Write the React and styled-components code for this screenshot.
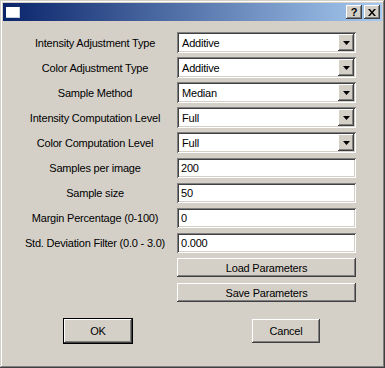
import React from "react";
import styled, { createGlobalStyle } from "styled-components";

const GlobalStyle = createGlobalStyle`
  html, body {
    margin: 0;
    padding: 0;
    background: #d4d0c8;
  }
  * {
    box-sizing: border-box;
  }
`;

const raised = `
  background: #d4d0c8;
  box-shadow: inset -1px -1px #404040, inset 1px 1px #ffffff,
    inset -2px -2px #808080, inset 2px 2px #d4d0c8;
`;

const sunken = `
  background: #ffffff;
  box-shadow: inset 1px 1px #808080, inset -1px -1px #ffffff,
    inset 2px 2px #404040, inset -2px -2px #d4d0c8;
`;

const Window = styled.div`
  width: 385px;
  height: 368px;
  padding: 3px;
  background: #d4d0c8;
  box-shadow: inset -1px -1px #404040, inset 1px 1px #d4d0c8,
    inset -2px -2px #808080, inset 2px 2px #ffffff;
  font-family: "Liberation Sans", Arial, sans-serif;
  font-size: 11px;
  letter-spacing: -0.2px;
  color: #000;
`;

const TitleBar = styled.div`
  height: 18px;
  display: flex;
  align-items: center;
  padding: 0 2px 0 3px;
  background: linear-gradient(to right, #0a246a, #a6caf0);
`;

const AppIcon = styled.div`
  width: 14px;
  height: 11px;
  background: #ffffff;
  box-shadow: inset -1px -1px #c8d0e0;
`;

const Spacer = styled.div`
  flex: 1;
`;

const CaptionButton = styled.button`
  ${raised}
  width: 16px;
  height: 14px;
  padding: 0;
  border: none;
  margin-left: ${(p) => (p.$gap ? "2px" : "0")};
  display: flex;
  align-items: center;
  justify-content: center;
  font-family: "Liberation Sans", Arial, sans-serif;
  font-weight: bold;
  font-size: 11px;
  line-height: 1;
  color: #000;
`;

const Client = styled.div`
  padding: 9px 0 0 17px;
`;

const Form = styled.div`
  display: grid;
  grid-template-columns: 150px 179px;
  grid-auto-rows: 25px;
  column-gap: 7px;
  align-items: center;
`;

const Label = styled.div`
  text-align: center;
  white-space: nowrap;
`;

const Combo = styled.div`
  ${sunken}
  height: 21px;
  display: flex;
  align-items: center;
  padding: 2px 2px 2px 5px;
`;

const ComboText = styled.span`
  flex: 1;
`;

const DropButton = styled.div`
  ${raised}
  width: 16px;
  height: 17px;
  display: flex;
  align-items: center;
  justify-content: center;
`;

const Edit = styled.div`
  ${sunken}
  height: 20px;
  display: flex;
  align-items: center;
  padding: 0 4px;
`;

const PushButton = styled.button`
  ${raised}
  grid-column: ${(p) => (p.$wide ? "2" : "auto")};
  height: ${(p) => (p.$wide ? "19px" : "24px")};
  width: ${(p) => (p.$wide ? "100%" : "68px")};
  border: none;
  padding: 0;
  font-family: "Liberation Sans", Arial, sans-serif;
  font-size: 11px;
  letter-spacing: -0.2px;
  color: #000;
`;

const DefaultFrame = styled.div`
  border: 1px solid #000;
  display: flex;
`;

const Footer = styled.div`
  display: flex;
  align-items: center;
  gap: 119px;
  margin-top: 13px;
  padding-left: 43px;
`;

const Arrow = () => (
  <svg width="7" height="4" viewBox="0 0 7 4">
    <path d="M0 0h7L3.5 4z" fill="#000" />
  </svg>
);

const CloseGlyph = () => (
  <svg width="8" height="7" viewBox="0 0 8 7">
    <path d="M0 0h2l2 2.5L6 0h2L5 3.5 8 7H6L4 4.5 2 7H0l3-3.5z" fill="#000" />
  </svg>
);

const combos = [
  ["Intensity Adjustment Type", "Additive"],
  ["Color Adjustment Type", "Additive"],
  ["Sample Method", "Median"],
  ["Intensity Computation Level", "Full"],
  ["Color Computation Level", "Full"],
];

const edits = [
  ["Samples per image", "200"],
  ["Sample size", "50"],
  ["Margin Percentage (0-100)", "0"],
  ["Std. Deviation Filter (0.0 - 3.0)", "0.000"],
];

export default function App() {
  return (
    <>
      <GlobalStyle />
      <Window>
        <TitleBar>
          <AppIcon />
          <Spacer />
          <CaptionButton>?</CaptionButton>
          <CaptionButton $gap>
            <CloseGlyph />
          </CaptionButton>
        </TitleBar>
        <Client>
          <Form>
            {combos.map(([label, value]) => (
              <React.Fragment key={label}>
                <Label>{label}</Label>
                <Combo>
                  <ComboText>{value}</ComboText>
                  <DropButton>
                    <Arrow />
                  </DropButton>
                </Combo>
              </React.Fragment>
            ))}
            {edits.map(([label, value]) => (
              <React.Fragment key={label}>
                <Label>{label}</Label>
                <Edit>{value}</Edit>
              </React.Fragment>
            ))}
            <PushButton $wide>Load Parameters</PushButton>
            <PushButton $wide>Save Parameters</PushButton>
          </Form>
          <Footer>
            <DefaultFrame>
              <PushButton>OK</PushButton>
            </DefaultFrame>
            <PushButton>Cancel</PushButton>
          </Footer>
        </Client>
      </Window>
    </>
  );
}
